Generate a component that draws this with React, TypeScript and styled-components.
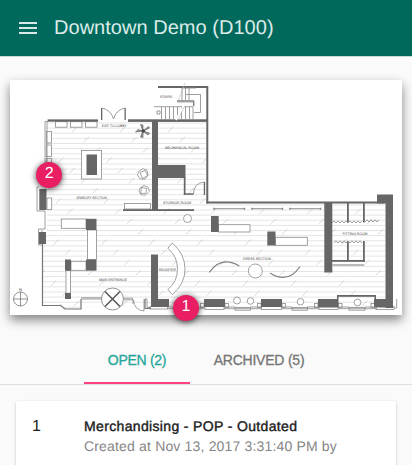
import React from 'react';
import styled, { createGlobalStyle } from 'styled-components';

const GlobalStyle = createGlobalStyle`
  * { box-sizing: border-box; }
  html, body { margin: 0; background: #fafafa; }
  body { overflow: hidden; font-family: 'Liberation Sans', Arial, sans-serif; text-rendering: geometricPrecision; }
`;

const Screen = styled.div`
  height: 465px;
  overflow: hidden;
  display: flex;
  flex-direction: column;
`;

const AppBar = styled.header`
  flex: 0 0 57px;
  display: flex;
  align-items: center;
  gap: 17px;
  padding-left: 19px;
  background: #00695c;
  border-bottom: 1px solid #c4dcd8;
  color: #dcebe8;
`;

const MenuButton = styled.button`
  width: 18px;
  height: 12px;
  padding: 0;
  border: 0;
  background: none;
  display: flex;
  flex-direction: column;
  justify-content: space-between;
`;

const MenuLine = styled.span`
  height: 2px;
  background: #d9eae7;
`;

const Title = styled.h1`
  margin: 0;
  font-size: 20px;
  font-weight: 400;
  line-height: 24px;
  letter-spacing: 0.03px;
  white-space: nowrap;
`;

const MapCard = styled.section`
  position: relative;
  flex: 0 0 235px;
  margin: 23px 10px 0;
  background: #fff;
  box-shadow: 0 5px 10px rgba(0, 0, 0, 0.48);
`;

const Plan = styled.svg`
  display: block;
  width: 392px;
  height: 235px;
`;

const Pin = styled.span<{ $x: number; $y: number }>`
  position: absolute;
  left: ${p => p.$x - 13}px;
  top: ${p => p.$y - 13}px;
  width: 26px;
  height: 26px;
  border-radius: 50%;
  background: #e91e63;
  color: #fff;
  font-size: 16px;
  line-height: 24px;
  text-align: center;
  box-shadow: 0 1px 6px rgba(0, 0, 0, 0.75);
`;

const Tabs = styled.nav`
  flex: 0 0 48px;
  margin-top: 22px;
  height: 48px;
  display: flex;
  justify-content: center;
  border-bottom: 1px solid #dedede;
`;

const Tab = styled.button<{ $active?: boolean }>`
  height: 47px;
  width: ${p => (p.$active ? 106 : 138)}px;
  padding: 0;
  border: 0;
  border-bottom: 2px solid ${p => (p.$active ? '#ff4081' : 'transparent')};
  background: none;
  color: ${p => (p.$active ? '#26a69a' : '#757575')};
  font: 400 14px/20px 'Liberation Sans', Arial, sans-serif;
  letter-spacing: ${p => (p.$active ? -0.3 : -0.22)}px;
  -webkit-text-stroke: 0.3px currentColor;
`;

const IssueCard = styled.article`
  flex: none;
  height: 100px;
  margin: 16px 16px 0;
  padding: 16px;
  display: grid;
  grid-template-columns: 52px 1fr;
  background: #fff;
  border-radius: 2px;
  box-shadow: 0 1px 3px rgba(0, 0, 0, 0.24);
`;

const IssueNumber = styled.span`
  font-size: 16px;
  line-height: 20px;
  color: #212121;
`;

const IssueTitle = styled.h2`
  margin: 0;
  font-size: 14px;
  font-weight: 400;
  line-height: 19px;
  letter-spacing: 0.35px;
  color: #212121;
  -webkit-text-stroke: 0.4px currentColor;
`;

const IssueMeta = styled.p`
  margin: 0;
  font-size: 14px;
  line-height: 20px;
  letter-spacing: 0.17px;
  color: #858585;
  white-space: nowrap;
`;

type Box = [number, number, number, number];

// Solid walls, columns and dark display blocks: x, y, width, height.
const solids: Box[] = [
  [47.6, 119.4, 50.4, 2.3], [101, 108, 1.3, 12], [124.5, 108, 1.3, 12],
  [128, 119.3, 80, 2.6], [152, 121, 6, 89], [158, 86, 50, 2],
  [206.3, 86, 2, 117.5], [158, 165, 27.5, 13], [183.8, 177, 1.7, 18],
  [183.8, 193.3, 9.7, 1.5], [203.8, 182, 1.3, 13], [206.3, 201.5, 178, 2],
  [123, 209.2, 71, 1.8], [377, 194.5, 16, 9], [385.5, 195, 7.5, 113],
  [324.3, 203, 8, 69.5], [347, 203, 1.8, 19.5], [363, 203, 1.8, 19.5],
  [347, 241.5, 1.8, 19], [363, 241, 1.8, 21], [332, 260, 32.8, 1.8],
  [86.5, 154.5, 10.5, 20.5], [39.3, 189, 7.2, 21], [39, 232, 7, 12],
  [86, 218.8, 10.5, 11.2], [86, 259.5, 10.5, 11.2], [65, 259.5, 6, 11.2],
  [65, 293, 6, 6], [151, 254.5, 7, 52], [151, 299, 18, 8],
  [204, 299, 21, 8], [211, 216, 7.7, 16], [267.3, 231.5, 8.2, 14],
  [261, 299, 21, 8], [318, 299, 20, 8.5], [337, 295, 39, 1.8],
  [337, 295, 1.5, 12], [374.5, 295, 1.5, 12], [374, 299, 19, 8.5],
];

const outlines: Box[] = [
  [55.5, 121.7, 11.5, 5.5], [70.5, 121.7, 11.5, 5.5], [85.5, 121.7, 11.5, 5.5],
  [46.3, 131.5, 5.2, 11.5], [46.3, 145, 5.2, 11.5], [46.3, 158.5, 5.2, 11],
  [47, 198, 4.7, 11.5], [81.5, 150.5, 20, 28.5], [61.3, 219, 24.7, 9.3],
  [87.5, 230, 9, 29.5], [71, 261.3, 15, 9], [66, 270.7, 4.6, 22.5],
  [124.5, 203.5, 26, 5.5], [218.5, 224.7, 31.5, 7.3], [275.3, 237.3, 32, 8],
  [150, 306.5, 17.5, 2.5], [205, 306.5, 19, 3], [261.5, 306.5, 20, 3],
  [235, 307.5, 15.5, 2.7], [292, 307.5, 15.5, 2.7], [319, 306.5, 19, 3],
  [349, 307.5, 16, 2.7], [376, 306.5, 18, 3], [200.5, 303.5, 3.5, 4],
  [225, 303.5, 3.5, 4], [257.5, 303.5, 3.5, 4], [282, 303.5, 3.5, 4],
  [314.5, 303.5, 3.5, 4], [338.5, 303.5, 3.5, 4], [371, 303.5, 3.5, 4],
];

const labels: [number, number, string, number][] = [
  [114.2, 127, 'EXIT TO LOBBY', 25], [166, 98, 'STAIRS', 12],
  [182, 149, 'MECHANICAL ROOM', 34], [177, 203.8, 'STORAGE ROOM', 28],
  [91.5, 198.6, 'JEWELRY SECTION', 31], [113, 281, 'MAIN ENTRANCE', 28],
  [167.3, 270.7, 'REGISTER', 17], [257, 260, 'DRESS SECTION', 28],
  [355, 234.7, 'FITTING ROOM', 25],
];

const boards = Array.from({ length: 37 }, (_, i) => 123 + i * 5.12);
const seams: [number, number][] = [];
for (let row = 0; row < 18; row++) {
  for (let col = -2; col < 9; col++) {
    seams.push([72 + col * 48 + (row * 11.4) % 48, 132 + row * 10.24]);
  }
}

const zigzag = (x: number, y: number, count: number) =>
  `M${x} ${y}` + Array.from({ length: count }, (_, i) => `l2 ${i % 2 ? 2.2 : -2.2}`).join('');

const FloorPlan = () => (
  <Plan viewBox="10 80 392 235" role="img" aria-label="Store floor plan">
    <defs>
      <clipPath id="floor">
        <path d="M47 122H152V203H158V122H206V203H385V307H81V300L80 308H65L60 305H43V244L47 230Z" />
      </clipPath>
    </defs>
    <g clipPath="url(#floor)" fill="none">
      {boards.map(y => <path key={y} d={`M42 ${y}H386`} stroke="#e0e0e0" strokeWidth=".85" />)}
      {seams.map(([x, y]) => (
        <path key={`${x}-${y}`} d={`M${x} ${y}l5.5 -5.3`} stroke="#c2c2c2" strokeWidth=".65" />
      ))}
    </g>
    <g fill="#fff" stroke="#8a8a8a" strokeWidth=".8">
      {outlines.map(([x, y, w, h]) => <rect key={`${x}-${y}`} x={x} y={y} width={w} height={h} />)}
      <circle cx="187.5" cy="218.5" r="4" />
      <circle cx="255.3" cy="271" r="7" />
      <circle cx="237" cy="300.5" r="3.5" />
      <circle cx="250.5" cy="301" r="3.3" />
      <circle cx="300.5" cy="301.7" r="3.3" />
      <circle cx="357.5" cy="302.5" r="3.4" />
      <path d="M172.3 243Q185 254 185 269T172.3 294.5L167.8 289.5Q177.5 282 177.5 269T167.8 248.3Z" />
    </g>
    <g fill="#666">
      {solids.map(([x, y, w, h]) => <rect key={`${x}-${y}-${w}`} x={x} y={y} width={w} height={h} />)}
    </g>
    <g fill="none" stroke="#858585" strokeWidth=".8">
      <path d="M45 121.5V170M47 121.5V170M45 121.5H48M39 187H37V211H45V229H38.5V245H42M81 299H102M81 297.8H102M124 298.2H133M124 299.8H133M133 299V304M42 230V232" />
      <path d="M102 108Q111 110 113.5 119Q116 110 125 108M204.5 182Q193.5 183 193.5 194M133.5 300Q134 310 144 311V299" />
      <path d="M145 299H147V307.5H151M167.5 307H204M167.5 308.7H205M224 307H235M224 308.7H262M250 307H262M282 307H292M282 308.7H319M307 307H319M338 307H349M338 308.7H377M365 307H376M394 308H396.7V299" />
      <path d="M332.5 265H364" stroke="#777" strokeWidth="1" />
      <path d="M154 106.7H193V119M161.5 107V119M165.5 107V119M169.5 107V119M173.5 107V119M177.5 107V119M181.5 107V119M185.5 107V119M189.5 107V119" />
      <path d="M177 100.5H194V106M182 88V100M185.5 88V100M189 88V100M182 88H196M186 94.5H200.5V112.5H194M157 111H160V114H157Z" />
      <path d="M176 120L184 105" stroke="#fff" strokeWidth="1.8" />
      <path d="M178 101L185 83M178 120L184 107" stroke="#bbb" strokeWidth=".6" />
      <path d={zigzag(332, 223, 15)} /><path d={zigzag(365, 222, 7)} /><path d={zigzag(334, 243, 14)} />
    </g>
    <path d="M177 101.8H193.5V106" fill="none" stroke="#777" strokeWidth="1" />
    <path d="M42.5 244V305.5H60M60 305L65 309H81V299M145 299V308.5H151" fill="none" stroke="#757575" strokeWidth="1.2" />
    <g fill="none" stroke="#858585" strokeWidth=".9">
      <path d="M213.5 208.7H245M251.5 208.7H283M289.5 208.7H321" />
      <path d="M214 207.7v2M244.5 207.7v2M252 207.7v2M282.5 207.7v2M290 207.7v2M320.5 207.7v2" strokeWidth="1.4" />
    </g>
    <g fill="none" stroke="#808080" strokeWidth="1.2">
      <path d="M209.3 272.5Q221 255.5 239.3 266M270 273Q288 284.5 300 266.5" />
    </g>
    <g fill="#fff" stroke="#777" strokeWidth=".8">
      <circle cx="112.5" cy="299" r="11" />
      <path d="M105 291.5L120 306.5M120 291.5L105 306.5" stroke="#555" strokeWidth="1.5" />
      <circle cx="20.5" cy="299" r="7" />
      <path d="M20.5 292V306M13.5 299H27.5" />
    </g>
    <g fill="#fff" stroke="#808080" strokeWidth=".7">
      <path d="M139 171l4-2.3 4 1.5 1 5-3 4-5-.3-2.5-4ZM140 172.5l5-2 2.7 5-5 3ZM140 188l4-2.5 4 1.7 1.5 4-4 4-4.5-.5-2-3.5ZM141.5 187.5l5.5 1-1.5 5-5-.2Z" />
    </g>
    <path d="M143 131L135.5 132L138 129.5ZM143 131L140.5 124.5L143 125ZM143 131L148.5 126.5L149.5 128ZM143 131L149.5 133L148 135ZM143 131L143 137.5L140.5 137Z" fill="#999" stroke="#555" strokeWidth=".6" />
    <circle cx="143.2" cy="131" r="1.8" fill="#444" />
    <g fill="#444" fontFamily="Liberation Sans, Arial, sans-serif" fontSize="3.5" textAnchor="middle">
      {labels.map(([x, y, text, width]) => (
        <text key={text} x={x} y={y} textLength={width} lengthAdjust="spacingAndGlyphs">{text}</text>
      ))}
      <text x="20.5" y="291" fontSize="4">N</text>
    </g>
  </Plan>
);

export default function App() {
  return (
    <>
      <GlobalStyle />
      <Screen>
        <AppBar>
          <MenuButton aria-label="Menu"><MenuLine /><MenuLine /><MenuLine /></MenuButton>
          <Title>Downtown Demo (D100)</Title>
        </AppBar>
        <MapCard>
          <FloorPlan />
          <Pin $x={39.3} $y={95}>2</Pin>
          <Pin $x={176} $y={228}>1</Pin>
        </MapCard>
        <Tabs>
          <Tab $active>OPEN (2)</Tab>
          <Tab>ARCHIVED (5)</Tab>
        </Tabs>
        <IssueCard>
          <IssueNumber>1</IssueNumber>
          <div>
            <IssueTitle>Merchandising - POP - Outdated</IssueTitle>
            <IssueMeta>Created at Nov 13, 2017 3:31:40 PM by</IssueMeta>
          </div>
        </IssueCard>
      </Screen>
    </>
  );
}
